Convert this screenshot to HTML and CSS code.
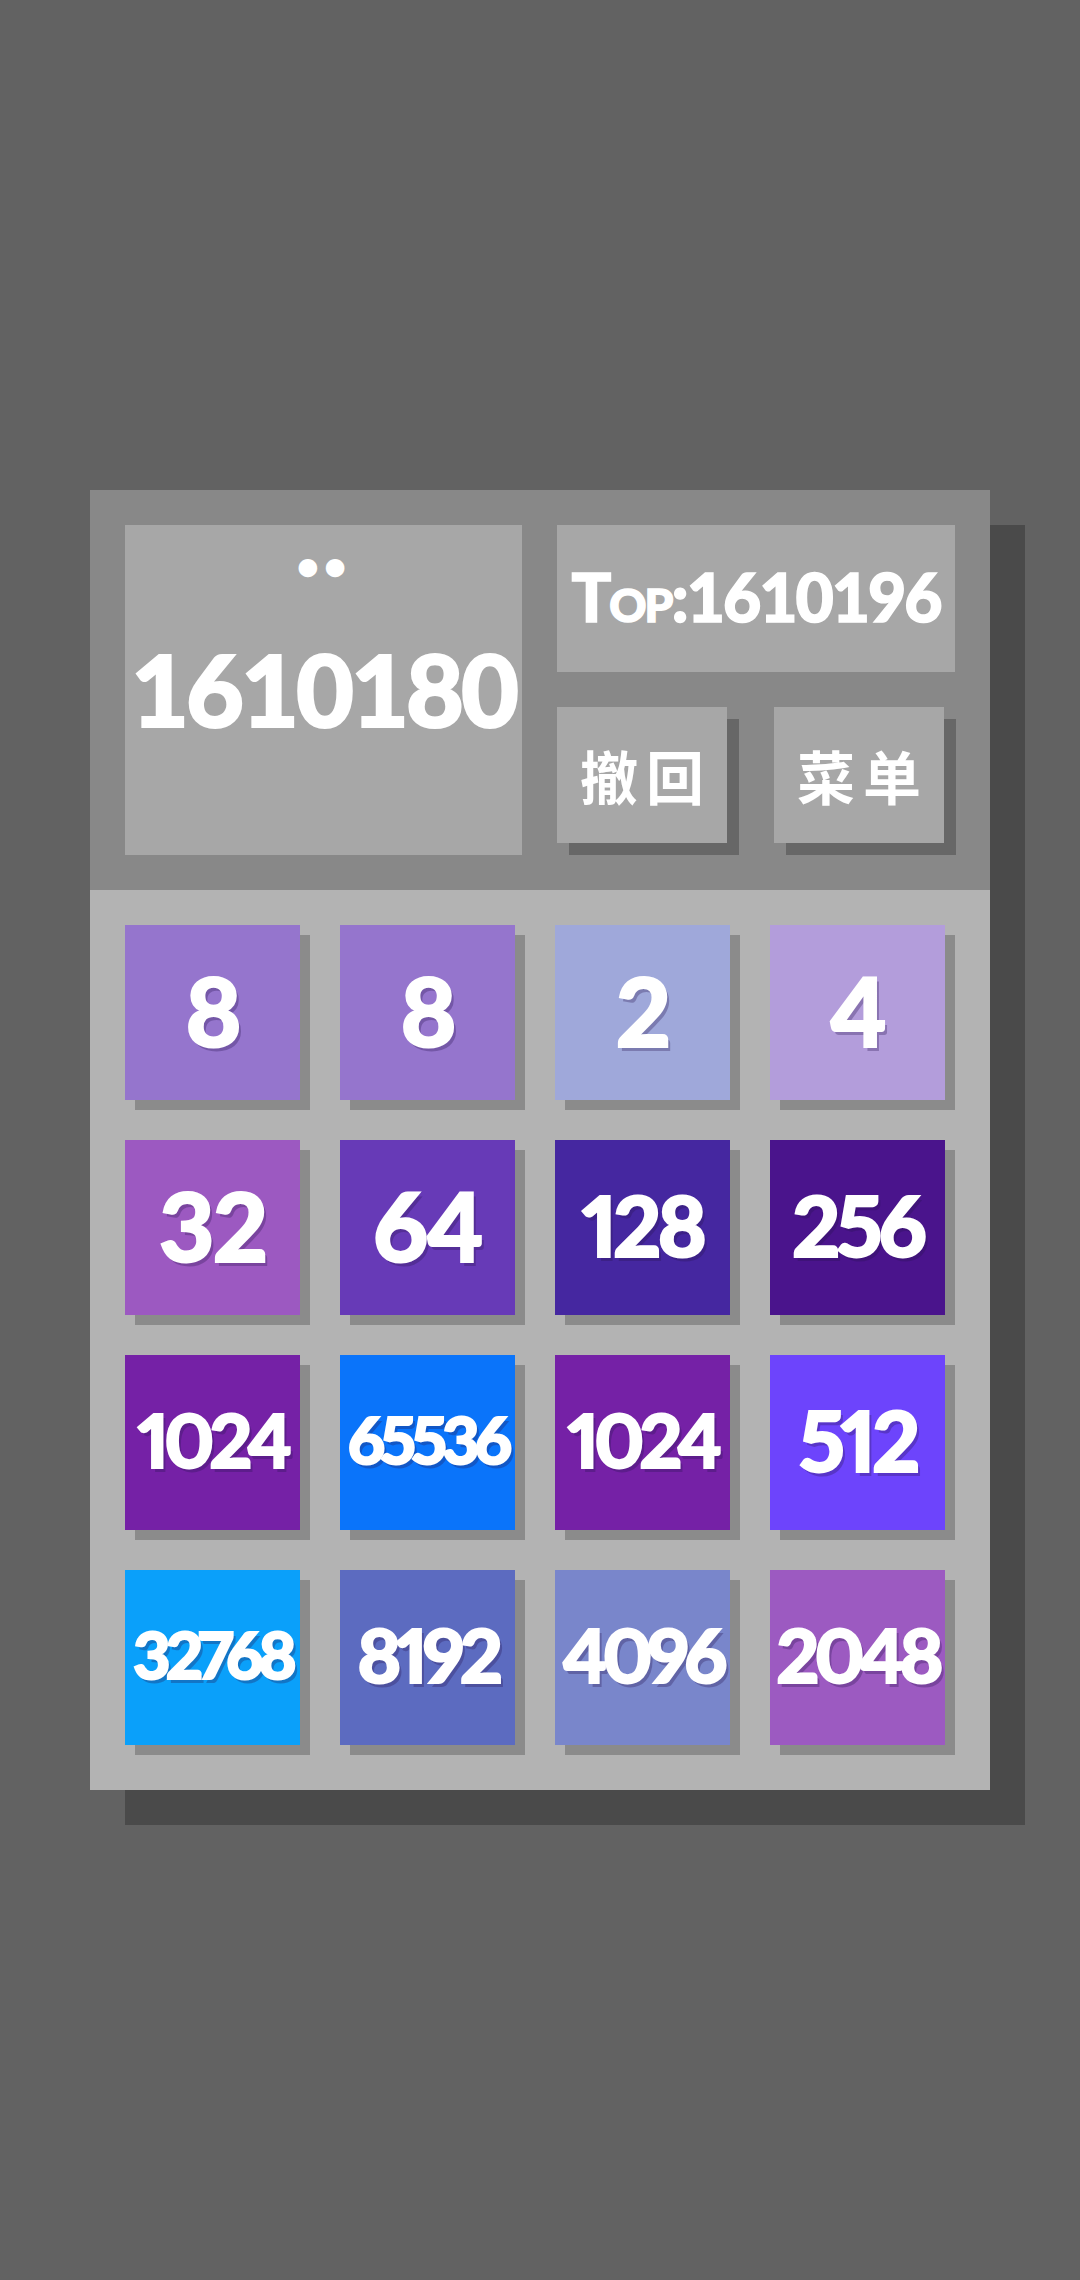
FILE: index.html
```html
<!DOCTYPE html>
<html lang="zh">
<head>
<meta charset="utf-8">
<title>2048</title>
<link rel="stylesheet" href="styles.css">
</head>
<body>
<main class="panel">
  <section class="header">
    <div class="score-box">
      <div class="dots">••</div>
      <div class="score">1610180</div>
    </div>
    <div class="side">
      <div class="top-box">Top:1610196</div>
      <div class="buttons">
        <div class="btn">撤回</div>
        <div class="btn">菜单</div>
      </div>
    </div>
  </section>
  <section class="board">
    <div class="tile t8 d1">8</div>
    <div class="tile t8 d1">8</div>
    <div class="tile t2 d1">2</div>
    <div class="tile t4 d1">4</div>
    <div class="tile t32 d2">32</div>
    <div class="tile t64 d2">64</div>
    <div class="tile t128 d3">128</div>
    <div class="tile t256 d3">256</div>
    <div class="tile t1024 d4">1024</div>
    <div class="tile t65536 d5">65536</div>
    <div class="tile t1024 d4">1024</div>
    <div class="tile t512 d3">512</div>
    <div class="tile t32768 d5">32768</div>
    <div class="tile t8192 d4">8192</div>
    <div class="tile t4096 d4">4096</div>
    <div class="tile t2048 d4">2048</div>
  </section>
</main>
</body>
</html>
```
FILE: styles.css
```css
html, body {
  margin: 0;
  padding: 0;
}
body {
  width: 1080px;
  height: 2280px;
  background: #626262;
  display: flex;
  align-items: center;
  justify-content: center;
  font-family: "Lato", "Noto Sans CJK SC", sans-serif;
  color: #ffffff;
}
.panel {
  width: 900px;
  display: flex;
  flex-direction: column;
  box-shadow: 35px 35px 0 #4a4a4a;
}
.header {
  background: #888888;
  height: 400px;
  box-sizing: border-box;
  padding: 35px;
  display: flex;
  gap: 35px;
}
.score-box {
  width: 397px;
  height: 330px;
  background: #a7a7a7;
  display: grid;
  grid-template-rows: 1fr auto 1fr;
  justify-items: center;
}
.dots {
  align-self: start;
  margin-top: 18px;
  font-size: 40px;
  line-height: 44px;
  letter-spacing: 4px;
  font-weight: 900;
}
.score {
  grid-row: 2;
  font-size: 100px;
  line-height: 1;
  font-weight: 900;
  letter-spacing: -3px;
  -webkit-text-stroke: 2px #ffffff;
  padding-bottom: 4px;
}
.side {
  width: 398px;
  display: flex;
  flex-direction: column;
  gap: 35px;
}
.top-box {
  height: 147px;
  background: #a7a7a7;
  display: flex;
  align-items: center;
  justify-content: center;
  font-size: 66px;
  font-weight: 900;
  font-variant: small-caps;
  letter-spacing: -2px;
  -webkit-text-stroke: 1.5px #ffffff;
  padding-bottom: 4px;
  box-sizing: border-box;
}
.buttons {
  display: flex;
  gap: 47px;
}
.btn {
  width: 170px;
  height: 136px;
  background: #a7a7a7;
  box-shadow: 12px 12px 0 #676767;
  display: flex;
  align-items: center;
  justify-content: center;
  font-family: "Noto Sans CJK SC", sans-serif;
  font-weight: 700;
  font-size: 58px;
  letter-spacing: 8px;
  padding-left: 8px;
  box-sizing: border-box;
}
.board {
  background: #b3b3b3;
  height: 900px;
  box-sizing: border-box;
  padding: 35px 45px 45px 35px;
  display: grid;
  grid-template-columns: repeat(4, 175px);
  grid-template-rows: repeat(4, 175px);
  gap: 40px;
}
.tile {
  box-shadow: 10px 10px 0 #8b8b8b;
  display: flex;
  align-items: center;
  justify-content: center;
  font-weight: 900;
  line-height: 1;
  padding-bottom: 6px;
  box-sizing: border-box;
  -webkit-text-stroke: 2px #ffffff;
  text-shadow: 3px 4px 0 rgba(40, 20, 80, 0.3);
  font-variant-numeric: proportional-nums;
}
.d1, .d2 { font-size: 96px; letter-spacing: -2px; }
.d3 { font-size: 84px; letter-spacing: -4px; }
.d4 { font-size: 75px; letter-spacing: -5px; }
.d5 { font-size: 65px; letter-spacing: -5px; }

.t2 { background: #9fa8da; }
.t4 { background: #b39ddb; }
.t8 { background: #9575cd; }
.t32 { background: #9c59c1; }
.t64 { background: #673ab7; }
.t128 { background: #4527a0; }
.t256 { background: #4a148c; }
.t512 { background: #6d44fc; }
.t1024 { background: #7521a6; }
.t2048 { background: #9c5ac1; }
.t4096 { background: #7986cb; }
.t8192 { background: #5c6bc0; }
.t32768 { background: #0aa0fa; }
.t65536 { background: #0a74fa; }
```
